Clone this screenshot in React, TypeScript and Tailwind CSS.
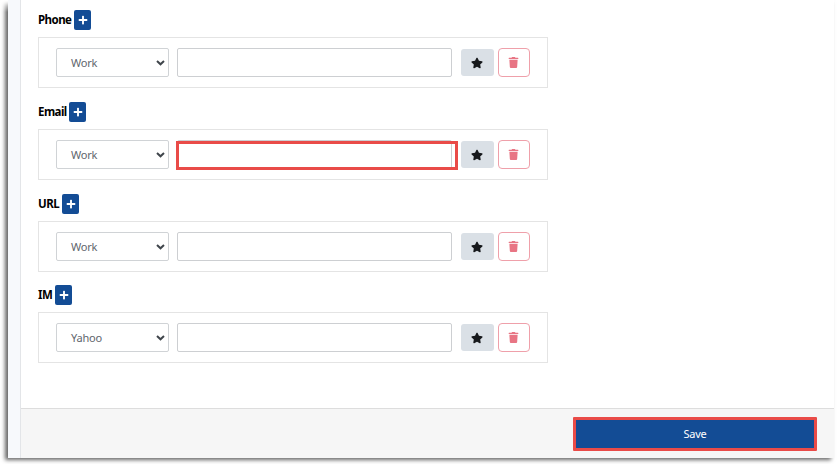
import { FaPlus, FaStar, FaTrash } from "react-icons/fa";

interface ContactField {
  label: string;
  type: string;
  labelClass: string;
  sectionClass: string;
  highlighted?: boolean;
}

const CONTACT_FIELDS: ContactField[] = [
  { label: "Phone", type: "Work", labelClass: "w-[33px]", sectionClass: "h-[92px]" },
  { label: "Email", type: "Work", labelClass: "w-[28px]", sectionClass: "h-[92px]", highlighted: true },
  { label: "URL", type: "Work", labelClass: "w-[21px]", sectionClass: "h-[91px]" },
  { label: "IM", type: "Yahoo", labelClass: "w-[14px]", sectionClass: "h-[92px]" },
];

function SelectArrow() {
  return (
    <svg className="h-[6px] w-[9px]" viewBox="0 0 9 6" fill="none">
      <path d="M1 1l3.5 3.3L8 1" stroke="#3f454b" strokeWidth="2" />
    </svg>
  );
}

function ContactSection({ field }: { field: ContactField }) {
  return (
    <section className={field.sectionClass}>
      <div className="flex h-5 items-center gap-[3px]">
        <h2 className={`${field.labelClass} whitespace-nowrap text-[11.5px] leading-5 font-bold tracking-[-0.55px] text-black`}>
          {field.label}
        </h2>
        <button className="flex h-5 w-[17px] items-center justify-center rounded-[2px] bg-[#134c95] text-white">
          <FaPlus className="h-[10px] w-[10px]" />
        </button>
      </div>

      <div className="mt-[7px] flex h-[51px] w-[510px] items-center border border-[#e4e4e4] bg-white pl-[17px]">
        <button className="flex h-[29px] w-[113px] items-center justify-between rounded-[2px] border border-[#d0d3d6] pr-[3px] pl-[14px] text-[11px] tracking-[-0.2px] text-[#5f666d]">
          <span className="pt-0.5">{field.type}</span>
          <SelectArrow />
        </button>

        <div className="relative ml-2 h-[29px] w-[275px]">
          <input className="block h-full w-full rounded-[2px] border border-[#cdcfd2] bg-white outline-none" />
          {field.highlighted && (
            <div className="absolute top-px -left-px h-[29px] w-[282px] border-3 border-[#e94b48]" />
          )}
        </div>

        <button className="ml-[8.5px] flex h-[27px] w-[33px] items-center justify-center rounded-[3px] bg-[#dae0e6] text-[#17191c]">
          <FaStar className="mr-px h-3 w-3" />
        </button>
        <button className="ml-1 flex h-[29px] w-[32.5px] items-center justify-center rounded-[4px] border border-[#efa0aa] text-[#e87584]">
          <FaTrash className="mr-px h-[11px] w-[11px]" />
        </button>
      </div>
    </section>
  );
}

export default function App() {
  return (
    <div className="relative h-[464px] w-[837px] overflow-hidden bg-white pl-2 font-['Noto_Sans','Open_Sans',sans-serif]">
      <div className="flex h-[458px] w-[826px] bg-white shadow-[-3px_2px_4px_rgba(0,0,0,0.6)]">
        <aside className="w-[13px] shrink-0 border-r border-[#e3e5e8] bg-[#f7f9fc]" />

        <div className="flex flex-1 flex-col">
          <main className="flex-1 pt-[10px] pl-[17px]">
            {CONTACT_FIELDS.map((field) => (
              <ContactSection key={field.label} field={field} />
            ))}
          </main>

          <footer className="flex h-[50px] justify-end border-t border-[#dddddd] bg-[#f6f6f6] pt-2 pr-[17px]">
            <button className="h-[34px] w-[244px] rounded-[1px] border-3 border-[#e94b48] bg-[#134c95] text-[11px] tracking-[-0.2px] text-white">
              Save
            </button>
          </footer>
        </div>
      </div>
      {/* the window shadow starts a few pixels below the top edge */}
      <div className="absolute top-0 left-0 h-3 w-2 bg-linear-to-b from-white to-transparent" />
    </div>
  );
}
